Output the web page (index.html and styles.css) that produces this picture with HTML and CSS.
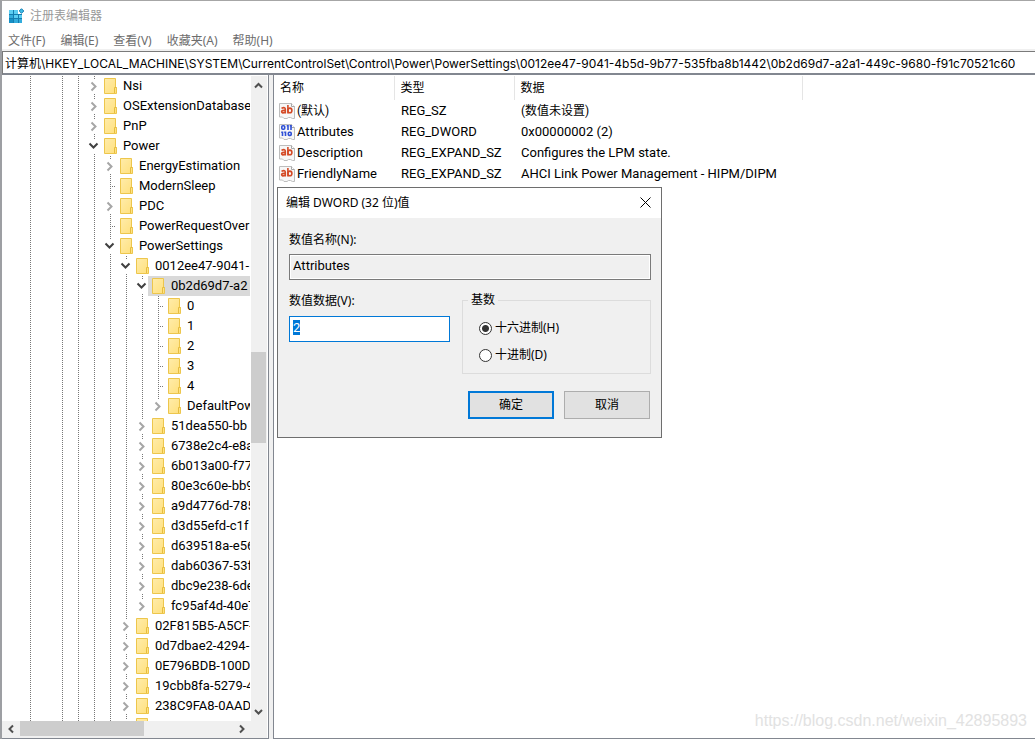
FILE: index.html
```html
<!DOCTYPE html>
<html lang="zh-CN">
<head>
<meta charset="utf-8">
<title>注册表编辑器</title>
<link rel="stylesheet" href="styles.css">
</head>
<body>
<svg class="defs" aria-hidden="true">
  <defs>
    <linearGradient id="paper" x1="0" y1="0" x2="1" y2="1"><stop offset="0" stop-color="#ffecaa"/><stop offset="1" stop-color="#ffe07c"/></linearGradient>
    <symbol id="folder" viewBox="0 0 13 16"><path d="M.5 .5h11v9h1v6H.5z" fill="url(#paper)" stroke="#edc64c"/><path d="M10.500 15V9.500h2" fill="none" stroke="#e6bd3e"/></symbol>
    <symbol id="right" viewBox="0 0 14 20"><path d="M5.500 6.500l4 4-4 4" fill="none" stroke="#a6a6a6" stroke-width="2"/></symbol>
    <symbol id="down" viewBox="0 0 14 20"><path d="M3.500 7.500l4 4 4-4" fill="none" stroke="#404040" stroke-width="2"/></symbol>
    <symbol id="sheet" viewBox="0 0 16 16"><path d="M.5 .5h12l3 3v12h-2l-2-1h-2l-1.500 1h-3l-1.500-1.500H.5z" fill="#f7f7f7" stroke="#bdbdbd"/><path d="M12.500 .5v3h3" fill="#fff" stroke="#a8a8a8"/></symbol>
    <symbol id="string" viewBox="0 0 16 16"><use href="#sheet"/><g fill="none" stroke="#d44a26" stroke-width="1.600"><path d="M2.500 5.200Q6.300 3.700 6.300 6.200V10.500M6.300 7.400Q2.600 7.200 2.600 8.700 2.800 10.800 6.300 9.100M8.900 2v8.500"/><ellipse cx="10.900" cy="7.400" rx="2" ry="2.300"/></g></symbol>
    <symbol id="binary" viewBox="0 0 16 16"><use href="#sheet"/><g fill="none" stroke="#2f50d6" stroke-width="1.600"><rect x="2.800" y="1.800" width="2.900" height="3.400" rx="1"/><path d="M9 1v5M12 1v5M3.500 7.500V12M6.500 7.500V12M7.700 1.800H9M10.700 1.800H12M2.200 8.300h1.300M5.200 8.300h1.300"/><rect x="9.300" y="8.200" width="2.900" height="3.200" rx="1"/></g></symbol>
  </defs>
</svg>
<div class="window">
  <header class="titlebar">
    <svg class="app-icon" viewBox="0 0 16 16"><path d="M1 2h9v4h4v9H1z" fill="#147caf"/><path d="M1 2h4v4H1zM6 2h4v4H6zM6 7h4v3H6zM11 7h3v3h-3z" fill="#5bcdf2"/><path d="M1 7h4v3H1zM6 11h4v4H6zM11 11h3v4h-3z" fill="#32acdc"/><path d="M1 11h4v4H1z" fill="#1590c6"/><path d="M13.500 .7l2.300 2.300-2.300 2.300L11.200 3z" fill="#3cbce8" stroke="#147caf"/></svg>
    <span>注册表编辑器</span>
  </header>
  <nav class="menu">
    <button>文件(F)</button><button>编辑(E)</button><button>查看(V)</button><button>收藏夹(A)</button><button>帮助(H)</button>
  </nav>
  <input class="address" aria-label="地址" value="计算机\HKEY_LOCAL_MACHINE\SYSTEM\CurrentControlSet\Control\Power\PowerSettings\0012ee47-9041-4b5d-9b77-535fba8b1442\0b2d69d7-a2a1-449c-9680-f91c70521c60">
  <main class="workspace">
    <section class="tree-pane">
      <div class="tree-view">
        <ul class="tree"><li><ul><li class="plain"><ul><li><ul><li><ul id="root"></ul></li></ul></li></ul></li></ul></li></ul>
      </div>
      <div class="vscroll">
        <button aria-label="向上"><svg viewBox="0 0 16 16"><path d="M4 10.500l3.500-3.500 3.500 3.500"/></svg></button>
        <div class="track"><div class="thumb"></div></div>
        <button aria-label="向下"><svg viewBox="0 0 16 16"><path d="M4 5l3.500 3.500 3.500-3.500"/></svg></button>
      </div>
      <div class="hscroll">
        <button aria-label="向左"><svg viewBox="0 0 16 16"><path d="M10 3.500l-3.500 3.500 3.500 3.500"/></svg></button>
        <div class="track"><div class="thumb"></div></div>
        <button aria-label="向右"><svg viewBox="0 0 16 16"><path d="M7 3.500l3.500 3.500-3.500 3.500"/></svg></button>
      </div>
    </section>
    <section class="list-pane">
      <table class="values">
        <colgroup><col class="c-name"><col class="c-type"><col class="c-data"></colgroup>
        <thead><tr><th>名称</th><th>类型</th><th>数据</th></tr></thead>
        <tbody>
          <tr><td><span class="name"><svg><use href="#string"/></svg><span class="han">(默认)</span></span></td><td>REG_SZ</td><td><span class="han">(数值未设置)</span></td></tr>
          <tr><td><span class="name"><svg><use href="#binary"/></svg>Attributes</span></td><td>REG_DWORD</td><td>0x00000002 (2)</td></tr>
          <tr><td><span class="name"><svg><use href="#string"/></svg>Description</span></td><td>REG_EXPAND_SZ</td><td>Configures the LPM state.</td></tr>
          <tr><td><span class="name"><svg><use href="#string"/></svg>FriendlyName</span></td><td>REG_EXPAND_SZ</td><td>AHCI Link Power Management - HIPM/DIPM</td></tr>
        </tbody>
      </table>
      <form class="dialog" role="dialog" aria-labelledby="dlg-title">
        <div class="dialog-title"><span id="dlg-title">编辑 DWORD (32 位)值</span>
          <button type="button" class="close" aria-label="关闭"><svg viewBox="0 0 11 11"><path d="M.5 .5l10 10M10.500 .5l-10 10"/></svg></button></div>
        <div class="dialog-body">
          <label for="vname">数值名称(N):</label>
          <input id="vname" class="readonly" value="Attributes" readonly>
          <div class="columns">
            <div class="data">
              <label for="vdata">数值数据(V):</label>
              <input id="vdata" class="active" value="2">
            </div>
            <fieldset>
              <legend>基数</legend>
              <label><input type="radio" name="base" checked>十六进制(H)</label>
              <label><input type="radio" name="base">十进制(D)</label>
            </fieldset>
          </div>
          <div class="actions"><button type="button" class="primary">确定</button><button type="button">取消</button></div>
        </div>
      </form>
      <p class="watermark">https://blog.csdn.net/weixin_42895893</p>
    </section>
  </main>
</div>
<script src="tree.js"></script>
</body>
</html>
```
FILE: styles.css
```css
* { box-sizing: border-box; }
body {
  margin: 0;
  font: 13px/20px Roboto, "Noto Sans CJK SC", sans-serif;
  color: #000;
}
button, input { font: inherit; color: inherit; margin: 0; }
ul, p, form, fieldset { margin: 0; padding: 0; }
ul { list-style: none; }
.defs { position: absolute; width: 0; height: 0; }

.window {
  display: flex;
  flex-direction: column;
  height: 100vh;
  border-top: 1px solid #a6a6a6;
  border-left: 2px solid #9d9fa3;
  background: #fff;
}
.titlebar {
  display: flex;
  align-items: center;
  gap: 6px;
  height: 30px;
  padding-left: 6px;
  font-size: 12px;
  color: #999;
}
.app-icon { width: 16px; height: 16px; }
.menu {
  display: flex;
  gap: 15px;
  height: 20px;
  padding-left: 6px;
  border-bottom: 2px solid #f0f0f0;
}
.menu button {
  padding: 0;
  border: 0;
  background: none;
  font: 12px/20px "Noto Sans", "Noto Sans CJK SC", sans-serif;
  color: #6d6d6d;
}
.address {
  height: 24px;
  padding: 0 2px 1px;
  border: 1px solid #7a7a7a;
  border-bottom: 2px solid #828790;
  border-right: 0;
  outline: 0;
  font: 12px/20px Inter, "Noto Sans CJK SC", sans-serif;
}

.workspace { flex: 1; display: flex; gap: 4px; min-height: 0; background: #f0f0f0; }
.tree-pane {
  flex: 0 0 267px;
  display: grid;
  grid-template: minmax(0, 1fr) 17px / minmax(0, 1fr) 16px;
  padding: 1px 1px 0 0;
  border-right: 1px solid #828790;
  border-bottom: 1px solid #828790;
  background: #fff;
}
.tree-view { overflow: hidden; padding-right: 1px; }
.tree { padding-left: 20px; }
.tree ul { margin-left: 16px; }
.tree li {
  background: repeating-linear-gradient(#777 0 1px, transparent 1px 2px) 8px 0 / 1px 100% no-repeat;
}
.tree li.last { background-size: 1px 10px; }
.tree li.plain { background: none; }
.row { display: flex; height: 20px; }
.twist { flex: none; width: 14px; height: 20px; padding: 3px 0; border: 0; background: none; }
.twist svg { display: block; width: 14px; height: 14px; background: #fff; }
.stub {
  flex: none;
  width: 14px;
  background: repeating-linear-gradient(90deg, #777 0 1px, transparent 1px 2px) 8px 10px / 6px 1px no-repeat;
}
.label {
  flex: 1;
  display: flex;
  align-items: center;
  gap: 6px;
  min-width: 0;
  padding-left: 4px;
  overflow: hidden;
  white-space: nowrap;
}
.label svg { flex: none; width: 13px; height: 16px; }
.selected { background: #d9d9d9; }

.vscroll, .hscroll { display: flex; background: #f0f0f0; }
.vscroll { flex-direction: column; }
.hscroll { grid-column: 1 / 3; padding: 0 17px 0 1px; }
.vscroll button, .hscroll button { flex: none; width: 17px; height: 17px; padding: 0; border: 0; background: none; }
.vscroll svg, .hscroll svg { display: block; width: 16px; height: 16px; fill: none; stroke: #505050; stroke-width: 2; }
.track { flex: 1; display: flex; }
.vscroll .track { flex-direction: column; }
.vscroll .track::before { content: ""; flex: 259; }
.vscroll .track::after { content: ""; flex: 261; }
.vscroll .thumb { flex: 90; width: 15px; background: #cdcdcd; }
.hscroll .thumb { width: 58%; height: 15px; background: #cdcdcd; }

.list-pane {
  position: relative;
  flex: 1;
  min-width: 0;
  border-left: 1px solid #828790;
  border-bottom: 1px solid #828790;
  background: #fff;
}
.values { table-layout: fixed; width: 528px; margin-top: 1px; border-collapse: collapse; }
.c-name { width: 120px; }
.c-type { width: 120px; }
.c-data { width: 288px; }
.values th {
  height: 24px;
  padding: 0 6px;
  border-right: 1px solid #e5e5e5;
  font-weight: 400;
  font-size: 12px;
  text-align: left;
}
.values td { height: 21px; padding: 0 7px; white-space: nowrap; }
.values td:first-child { padding-left: 5px; }
.name { display: flex; align-items: center; gap: 2px; }
.name svg { width: 16px; height: 16px; }
.han { font-size: 12px; }

.dialog {
  position: absolute;
  left: 3px;
  top: 112px;
  width: 385px;
  border: 1px solid #6e6e6e;
  background: #f0f0f0;
  font: 12px/20px "Noto Sans", "Noto Sans CJK SC", sans-serif;
}
.dialog-title {
  display: flex;
  justify-content: space-between;
  align-items: center;
  height: 30px;
  padding: 0 10px 0 8px;
  background: #fff;
}
.close { display: flex; align-items: center; height: 30px; padding: 0 0 2px; border: 0; background: none; }
.close svg { width: 11px; height: 11px; fill: none; stroke: #000; }
.dialog-body { padding: 12px 10px 18px 11px; }
.dialog-body label { display: block; line-height: 20px; }
.readonly, .active {
  display: block;
  width: 100%;
  height: 26px;
  padding: 0 3px 3px;
  font: 13px/20px Roboto, sans-serif;
  outline: 0;
}
.readonly { margin-top: 4px; border: 1px solid #7a7a7a; background: #f0f0f0; box-shadow: inset 0 0 0 1px #fff; }
.active { margin-top: 5px; border: 1px solid #0078d7; background: #fff; }
.active::selection { background: #0078d7; color: #fff; }
.columns { display: flex; gap: 12px; margin-top: 10px; }
.data { width: 161px; padding-top: 1px; }
fieldset { flex: 1; min-width: 0; height: 84px; padding: 8px 16px 0; border: 1px solid #dcdcdc; }
legend { margin-left: -11px; padding: 0 3px; line-height: 20px; }
.dialog fieldset label { display: flex; align-items: center; gap: 3px; margin-bottom: 7px; }
fieldset input {
  appearance: none;
  width: 13px;
  height: 13px;
  border: 1px solid #333;
  border-radius: 50%;
  background: #fff;
}
fieldset input:checked { background: radial-gradient(#333 0 3px, #fff 4px); }
.actions { display: flex; justify-content: flex-end; gap: 10px; margin-top: 17px; padding-right: 1px; }
.actions button { width: 86px; height: 28px; padding: 0; border: 1px solid #adadad; background: #e1e1e1; }
.actions .primary { border: 2px solid #0078d7; }

.watermark { position: absolute; right: 8px; bottom: 7px; font: 16px/20px "Liberation Sans", sans-serif; color: #e2e2e2; }
```
FILE: tree.js
```js
const keys = [
  { name: "Nsi" },
  { name: "OSExtensionDatabase" },
  { name: "PnP" },
  { name: "Power", children: [
    { name: "EnergyEstimation" },
    { name: "ModernSleep", leaf: true },
    { name: "PDC" },
    { name: "PowerRequestOver", leaf: true },
    { name: "PowerSettings", children: [
      { name: "0012ee47-9041-", children: [
        { name: "0b2d69d7-a2", selected: true, children: [
          ...["0", "1", "2", "3", "4"].map(name => ({ name, leaf: true })),
          { name: "DefaultPow" },
        ] },
        ...["51dea550-bb", "6738e2c4-e8a", "6b013a00-f77", "80e3c60e-bb9", "a9d4776d-785",
            "d3d55efd-c1f", "d639518a-e56", "dab60367-53f", "dbc9e238-6de", "fc95af4d-40e7"].map(name => ({ name })),
      ] },
      ...["02F815B5-A5CF-", "0d7dbae2-4294-", "0E796BDB-100D", "19cbb8fa-5279-4",
          "238C9FA8-0AAD", ""].map(name => ({ name })),
    ] },
    { name: "" },
  ] },
  { name: "" },
];

function render(list, parent) {
  list.forEach((key, i) => {
    const li = document.createElement("li");
    if (i === list.length - 1) li.className = "last";
    const toggle = key.leaf
      ? '<span class="stub"></span>'
      : `<button class="twist" aria-label="${key.name}"><svg viewBox="0 3 14 14"><use href="#${key.children ? "down" : "right"}" width="14" height="20"/></svg></button>`;
    li.innerHTML = `<div class="row">${toggle}<span class="label${key.selected ? " selected" : ""}"><svg><use href="#folder"/></svg>${key.name}</span></div>`;
    if (key.children) {
      const ul = document.createElement("ul");
      render(key.children, ul);
      li.append(ul);
    }
    parent.append(li);
  });
}

render(keys, document.getElementById("root"));
const field = document.getElementById("vdata");
field.focus();
field.select();
```
